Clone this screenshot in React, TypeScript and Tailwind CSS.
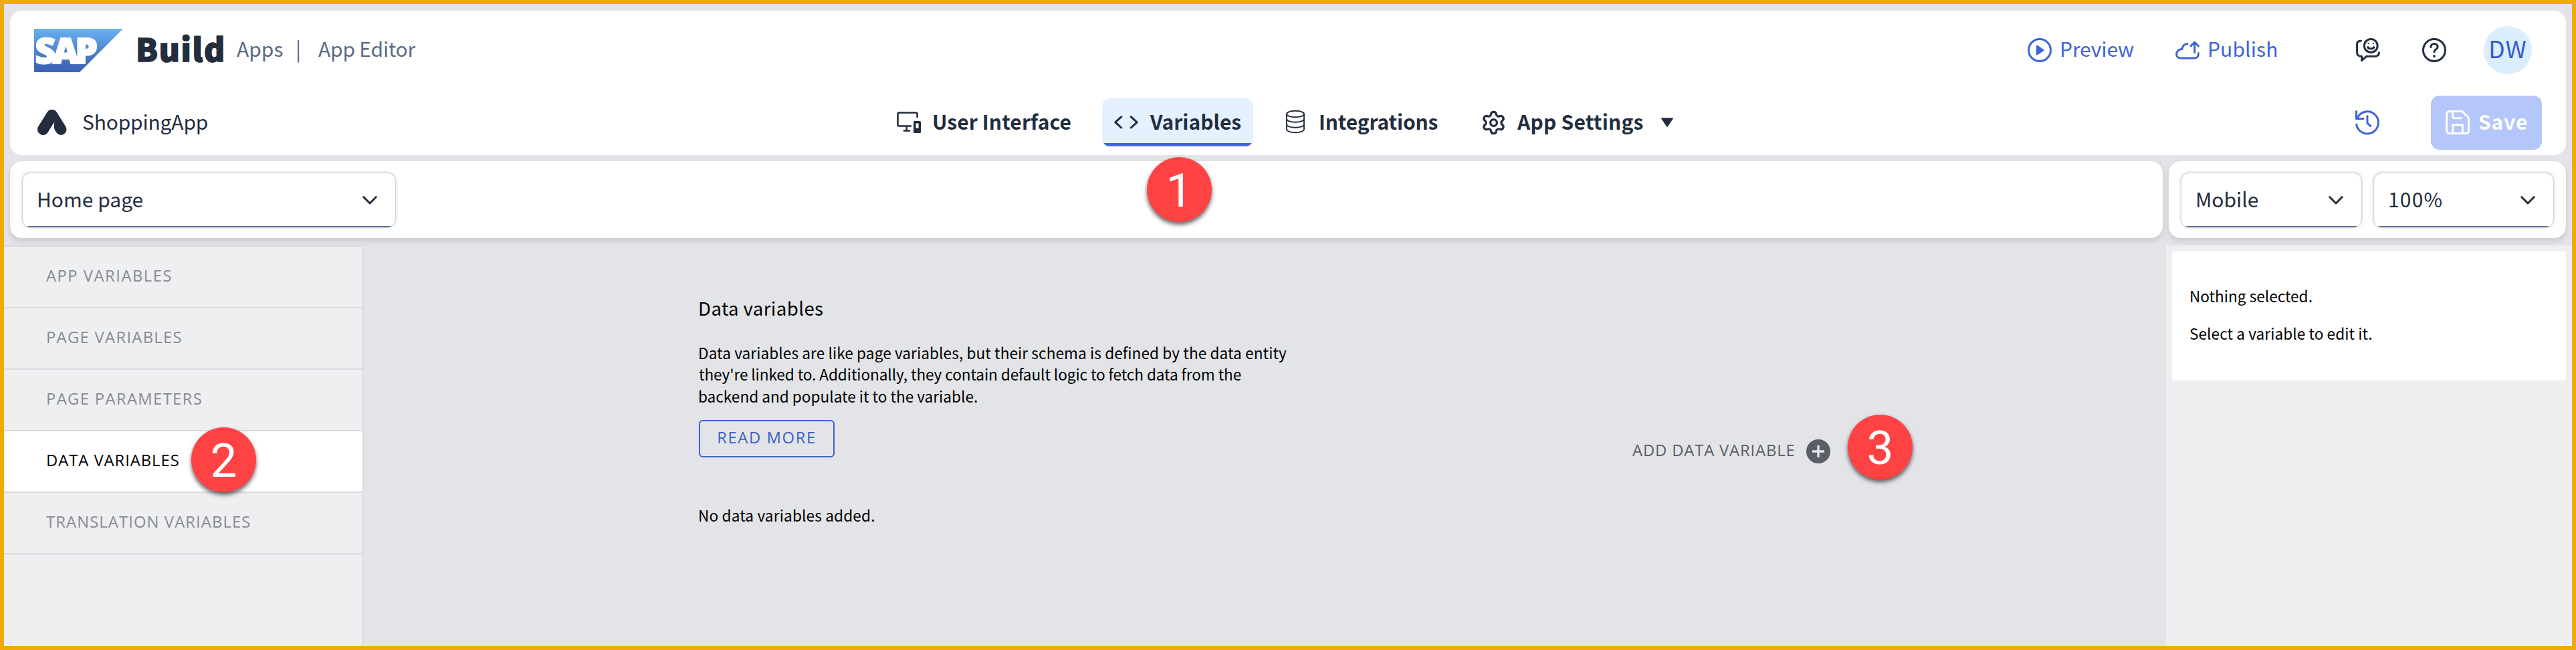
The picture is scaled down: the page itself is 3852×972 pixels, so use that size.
import type { ReactNode } from "react";
import { Settings } from "lucide-react";
import clsx from "clsx";

type IconProps = { children: ReactNode; className?: string; width?: number };

function Icon({ children, className, width = 3 }: IconProps) {
  return (
    <svg
      viewBox="0 0 36 36"
      className={clsx("size-9 shrink-0 overflow-visible", className)}
      fill="none"
      stroke="currentColor"
      strokeWidth={width}
      strokeLinecap="round"
      strokeLinejoin="round"
    >
      {children}
    </svg>
  );
}

function SapLogo() {
  return (
    <svg viewBox="0 0 133 65" className="h-[65px] w-[133px] shrink-0">
      <defs>
        <linearGradient id="sap" x1="0" y1="0" x2="0" y2="1">
          <stop offset="0" stopColor="#69b0f1" />
          <stop offset="0.5" stopColor="#4c86cd" />
          <stop offset="0.8" stopColor="#406abb" />
          <stop offset="1" stopColor="#3d65b2" />
        </linearGradient>
      </defs>
      <path d="M0 0H133L68 65H0Z" fill="url(#sap)" />
      <text
        x="1.5 28 61.5"
        y="51.5"
        fill="#fff"
        stroke="#fff"
        strokeWidth="2.2"
        className="font-['Open_Sans',sans-serif] text-[53px] font-extrabold"
      >
        SAP
      </text>
    </svg>
  );
}

function Tab({ icon, label, active, children }: { icon: ReactNode; label: ReactNode; active?: boolean; children?: ReactNode }) {
  return (
    <div className={clsx("flex h-[72px] flex-col overflow-hidden rounded-[12px]", active && "bg-[#e3f2fe]")}>
      <div className="flex h-[67px] items-center gap-[18px] px-[18px] pt-[5px] font-bold">
        {icon}
        {label}
        {children}
      </div>
      {active && <div className="h-[5px] border-b border-[#8ba5ec] bg-[#3e64da]" />}
    </div>
  );
}

function Select({ label, className, labelClass }: { label: string; className: string; labelClass?: string }) {
  return (
    <div
      className={clsx(
        "flex h-[82px] flex-col overflow-hidden rounded-[13px] border-x border-t border-[#cfd6de] bg-white shadow-[0_0_4px_rgba(91,115,139,0.35)]",
        className,
      )}
    >
      <div className="flex flex-1 items-center justify-between pr-[27px] pl-[21px]">
        <span className={clsx("pb-[3px] whitespace-nowrap", labelClass)}>{label}</span>
        <svg viewBox="0 0 22 13" className="mt-[2px] h-[13px] w-[22px]" fill="none" stroke="#232d3e" strokeWidth="3" strokeLinecap="round" strokeLinejoin="round">
          <path d="M1.8 1.7 11 11 20.2 1.7" />
        </svg>
      </div>
      <div className="h-[2px] bg-[#5b738b]" />
    </div>
  );
}

function Badge({ n, className }: { n: number; className: string }) {
  return (
    <div
      className={clsx(
        "absolute flex size-[97px] items-center justify-center rounded-full bg-[#ff4344] pt-[2px] font-['Roboto',sans-serif] text-[71px] leading-none text-white shadow-[0_4px_6px_rgba(0,0,0,0.6)]",
        className,
      )}
    >
      {n}
    </div>
  );
}

const sidebar = [
  { label: "APP VARIABLES", track: "tracking-[1.5px]" },
  { label: "PAGE VARIABLES", track: "tracking-[1.3px]" },
  { label: "PAGE PARAMETERS", track: "tracking-[1.35px]" },
  { label: "DATA VARIABLES", track: "tracking-[0.95px]", active: true },
  { label: "TRANSLATION VARIABLES", track: "tracking-[1.1px]" },
];

export default function App() {
  return (
    <div className="relative flex h-[972px] w-[3852px] flex-col overflow-hidden border-[6px] border-[#f0ab00] bg-[#e3e4e8] font-['Noto_Sans_CJK_SC',sans-serif] text-[30px] leading-10 text-[#232d3e]">
      <header className="mx-[9px] mt-[10px] flex h-[216px] shrink-0 flex-col rounded-[18px] bg-white">
        <div className="flex h-[118px] items-center pr-[51px] pl-9 whitespace-nowrap">
          <SapLogo />
          <span className="ml-[19px] w-[133px] pb-[7px] text-[47.5px] font-black tracking-[1.7px] [-webkit-text-stroke:1.6px_#232d3e]">Build</span>
          <span className="ml-[18px] w-[88px] pb-[6px] text-[#5a6b84]">Apps</span>
          <span className="w-[34px] pb-[6px] text-[#5a6b84]">|</span>
          <span className="pb-[6px] tracking-[-0.2px] text-[#5a6b84]">App Editor</span>
          <div className="ml-auto flex items-center text-[#3e64da]">
            <Icon>
              <circle cx="18" cy="18" r="16.5" />
              <path d="M14 11.4V24.6L23.7 18Z" fill="currentColor" strokeWidth="2" />
            </Icon>
            <span className="ml-3 w-[173px] pb-[6px] tracking-[-0.1px]">Preview</span>
            <Icon>
              <path d="M18 8.4C13.5 8.8 10.6 11.5 10 16.2C5 17 1.6 20 1.6 24C1.6 27.6 4.4 30 8 30H28.5C32.5 30 34.6 27.5 34.4 22.5" />
              <path d="M28.7 21.5V6.8M22.9 11.8L28.7 6.2L34.6 11.8" />
            </Icon>
            <span className="ml-3 w-[222px] pb-[6px] tracking-[0.1px]">Publish</span>
            <Icon className="text-[#232d3e]">
              <path d="M7.6 4C3.6 4 1.6 5.6 1.6 9V21.5C1.6 25.5 3.5 27.2 8.6 27.2V33.6L15.6 27.2H27.5C32.5 27.2 34.5 25.5 34.4 21.8" />
              <circle cx="22.3" cy="11.4" r="9.9" />
              <path d="M17.8 13.6C19 16.6 25.6 16.6 26.8 13.6" />
              <path d="M18.6 7.9V8M26.2 7.9V8" strokeWidth="2.2" />
            </Icon>
            <Icon className="ml-[63px] text-[#232d3e]">
              <circle cx="18" cy="18" r="16.5" />
              <path d="M12.9 13.4C12.9 6.8 23.1 6.8 23.1 13.4C23.1 16.8 18 16.8 18 20.6" />
              <path d="M18 27V27.05" strokeWidth="3.8" />
            </Icon>
            <div className="ml-14 flex size-[72px] items-center justify-center rounded-full bg-[#dbeefe] pb-[7px] text-[35.5px] tracking-[1px] text-[#355ccf]">DW</div>
          </div>
        </div>

        <div className="flex h-[98px] items-center pr-9 pl-[41px] whitespace-nowrap">
          <svg viewBox="0 0 44 38" className="h-[38px] w-11 shrink-0" fill="none" stroke="#232d3e" strokeWidth="16.5" strokeLinecap="round">
            <path d="M21.6 8.4 8.4 29.6" />
            <path d="M22 8.4 35.2 29.6" />
            <path d="M25.3 17.7 14.5 36L29.5 38C25.5 33 24 26 25.3 17.7Z" fill="#fff" stroke="none" />
            <path d="M21.6 8.4 8.4 29.6" />
          </svg>
          <span className="ml-[23px] w-[1200px] pb-[5px] tracking-[-0.2px]">ShoppingApp</span>

          <nav className="flex gap-7">
            <Tab
              label={<span className="-ml-px w-[208px] pb-[5px] tracking-[0.1px]">User Interface</span>}
              icon={
                <Icon width={2.6}>
                  <path d="M30.6 10V5.5C30.6 4.2 29.9 3.5 28.6 3.5H3.5C2.2 3.5 1.5 4.2 1.5 5.5V21.5C1.5 22.8 2.2 23.5 3.5 23.5H21M14.7 23.5V30.5M10.8 30.5H19" />
                  <path d="M26.5 16H34.5Q36 16 36 17.5V32.5Q36 34 34.5 34H26.5Q25 34 25 32.5V17.5Q25 16 26.5 16ZM28.6 19.6V26.6H32.6V19.6Z" fill="currentColor" fillRule="evenodd" stroke="none" />
                </Icon>
              }
            />
            <Tab
              active
              label={<span className="w-[136px] pb-[5px]">Variables</span>}
              icon={
                <Icon>
                  <path d="M10.8 9.6 1.7 17.8 10.8 26M25.2 9.6 34.3 17.8 25.2 26" />
                </Icon>
              }
            />
            <Tab
              label={<span className="-ml-[2px] w-[179px] pb-[5px] tracking-[-0.15px]">Integrations</span>}
              icon={
                <Icon width={1.9}>
                  <ellipse cx="17" cy="5.5" rx="13" ry="4.7" />
                  <path d="M4 5.5V28.5C4 31.1 9.8 33.2 17 33.2S30 31.1 30 28.5V5.5M4 13C4 15.6 9.8 17.7 17 17.7S30 15.6 30 13M4 21C4 23.6 9.8 25.7 17 25.7S30 23.6 30 21" />
                </Icon>
              }
            />
            <Tab label={<span className="w-[190px] pb-[5px] tracking-[0.2px]">App Settings</span>} icon={<Settings className="-mx-[1.5px] size-[39px]" strokeWidth={2} />}>
              <svg viewBox="0 0 18 14" className="ml-[7px] h-[14px] w-[18px]" fill="#232d3e" stroke="#232d3e" strokeWidth="2" strokeLinejoin="round">
                <path d="M1.2 1.2H16.8L9 12.6Z" />
              </svg>
            </Tab>
          </nav>

          <Icon className="ml-auto text-[#3e64da]">
            <path d="M3.4 10.6A16.5 16.5 0 1 1 1.7 21.2" />
            <path d="M1.5 1.5V12.5H12M18 8.5V19.2L22.8 23.7" />
          </Icon>
          <div className="ml-[77px] flex h-[81px] w-[166px] items-center rounded-[13px] bg-[#b4c6fa] pl-[22px] text-white">
            <Icon>
              <path d="M6 1.5H24.8L34.5 11.2V30Q34.5 34.5 30 34.5H6Q1.5 34.5 1.5 30V6Q1.5 1.5 6 1.5Z" />
              <path d="M10.7 2V9.5Q10.7 11.7 12.9 11.7H23.5M10.7 34V21.7H25.3V34" />
            </Icon>
            <span className="ml-[13px] pb-[5px] font-bold tracking-[0.8px]">Save</span>
          </div>
        </div>
      </header>

      <div className="mx-[9px] mt-[9px] flex h-[115px] shrink-0 gap-[9px]">
        <div className="flex-1 rounded-[18px] bg-white pt-[17px] pl-[18px] shadow-[0_4px_10px_rgba(0,0,0,0.12)]">
          <Select label="Home page" className="w-[559px]" />
        </div>
        <div className="flex w-[594px] gap-[17px] rounded-[18px] bg-white pt-[17px] pl-[18px] shadow-[0_4px_10px_rgba(0,0,0,0.12)]">
          <Select label="Mobile" className="w-[271px]" />
          <Select label="100%" className="w-[270px]" labelClass="tracking-[1.2px]" />
        </div>
      </div>

      <div className="mt-[11px] flex min-h-0 flex-1 text-[22.6px] leading-[32.4px] text-black">
        <aside className="w-[538px] shrink-0 border-t-2 border-r-2 border-[#d8dadd] bg-[#eeeff1]">
          {sidebar.map((s) => (
            <div
              key={s.label}
              className={clsx(
                "flex h-[92px] items-center border-b-2 border-[#d8dadd] pb-[4px] pl-[63px] font-['Open_Sans',sans-serif] text-[23.8px]",
                s.active ? "bg-white text-black" : "text-[#878a92]",
                s.track,
              )}
            >
              {s.label}
            </div>
          ))}
        </aside>

        <main className="flex flex-1 pl-[500px] whitespace-nowrap">
          <section className="w-[1397px] pt-[73px]">
            <h1 className="text-[27.6px] leading-10 tracking-[0.4px]">Data variables</h1>
            <p className="mt-[32px]">
              <span className="block tracking-[0.09px]">Data variables are like page variables, but their schema is defined by the data entity</span>
              <span className="block pl-px tracking-[-0.09px]">they're linked to. Additionally, they contain default logic to fetch data from the</span>
              <span className="block">backend and populate it to the variable.</span>
            </p>
            <div className="mt-[19px] ml-px flex h-14 w-[203px] items-center justify-center rounded-[6px] border-2 border-[#3e63cf] pb-[4px] font-['Open_Sans',sans-serif] text-[23.8px] tracking-[1.6px] text-[#3e5fc8]">
              READ MORE
            </div>
            <p className="mt-[71px] tracking-[0.15px]">No data variables added.</p>
          </section>
          <div className="mt-[290px] flex h-9 items-center">
            <span className="w-[260px] pb-[4px] font-['Open_Sans',sans-serif] text-[23.8px] tracking-[0.85px] text-[#5b5e63]">ADD DATA VARIABLE</span>
            <div className="flex size-9 items-center justify-center rounded-full bg-[#5b5e66]">
              <svg viewBox="0 0 18 18" className="size-[18px]" stroke="#e3e4e8" strokeWidth="3.4">
                <path d="M9 0V18M0 9H18" />
              </svg>
            </div>
          </div>
        </main>

        <aside className="w-[607px] shrink-0 bg-[#eeeff1] pt-[9px] pl-[9px]">
          <div className="h-[193px] w-[589px] bg-white pt-[51px] pl-[26px]">
            <p>Nothing selected.</p>
            <p className="mt-[24px] tracking-[0.07px]">Select a variable to edit it.</p>
          </div>
        </aside>
      </div>

      <Badge n={1} className="top-[229px] left-[1709px]" />
      <Badge n={2} className="top-[633px] left-[280px]" />
      <Badge n={3} className="top-[614px] left-[2757px]" />
    </div>
  );
}
